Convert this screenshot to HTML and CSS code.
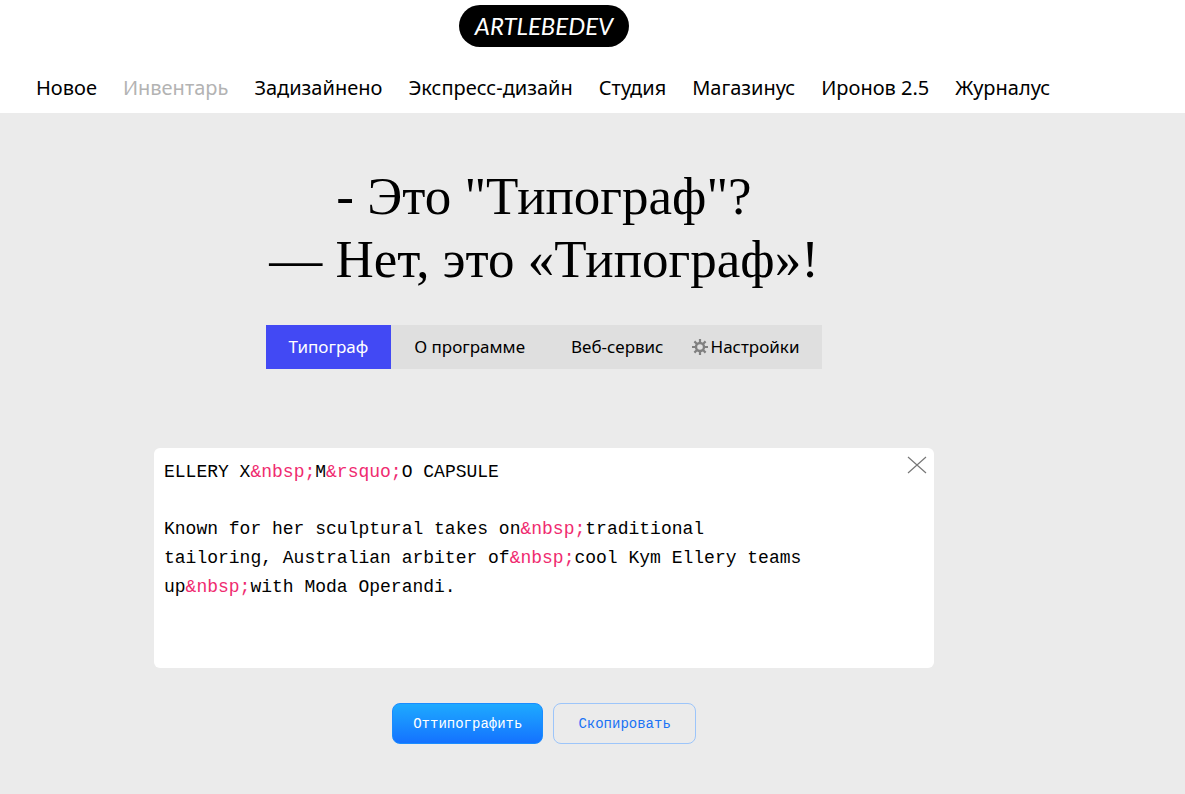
FILE: index.html
```html
<!DOCTYPE html>
<html lang="ru">
<head>
<meta charset="utf-8">
<meta name="viewport" content="width=device-width, initial-scale=1">
<title>Типограф</title>
<link rel="stylesheet" href="styles.css">
</head>
<body>
<header class="header">
  <div class="page">
    <a class="logo" href="#">ARTLEBEDEV</a>
    <nav class="menu" aria-label="Разделы">
      <a class="menu-link" href="#">Новое</a>
      <a class="menu-link menu-link-current" href="#">Инвентарь</a>
      <a class="menu-link" href="#">Задизайнено</a>
      <a class="menu-link" href="#">Экспресс-дизайн</a>
      <a class="menu-link" href="#">Студия</a>
      <a class="menu-link" href="#">Магазинус</a>
      <a class="menu-link" href="#">Иронов 2.5</a>
      <a class="menu-link" href="#">Журналус</a>
    </nav>
  </div>
</header>
<main class="main">
  <div class="page content">
    <h1 class="title">- Это "Типограф"?<br>— Нет, это «Типограф»!</h1>
    <nav class="tabs" aria-label="Типограф">
      <a class="tab tab-active" href="#">Типограф</a>
      <a class="tab" href="#">О программе</a>
      <a class="tab" href="#">Веб-сервис</a>
      <a class="tab tab-settings" href="#">
        <svg class="gear" viewBox="0 0 16 16" aria-hidden="true">
          <circle cx="8" cy="8" r="4" fill="none" stroke="currentColor" stroke-width="2.4"/>
          <path d="M8 0v4M8 12v4M0 8h4M12 8h4M2.4 2.4l2.6 2.6M11 11l2.6 2.6M13.6 2.4L11 5M5 11l-2.6 2.6" stroke="currentColor" stroke-width="2.2"/>
        </svg>Настройки</a>
    </nav>
    <section class="editor">
      <div class="text" role="textbox" aria-multiline="true" aria-label="Текст" contenteditable="true" spellcheck="false">
        <p class="paragraph">ELLERY X<span class="entity">&amp;nbsp;</span>M<span class="entity">&amp;rsquo;</span>O CAPSULE</p>
        <p class="paragraph">Known for her sculptural takes on<span class="entity">&amp;nbsp;</span>traditional<br>tailoring, Australian arbiter of<span class="entity">&amp;nbsp;</span>cool Kym Ellery teams<br>up<span class="entity">&amp;nbsp;</span>with Moda Operandi.</p>
      </div>
      <button class="clear" type="button" aria-label="Очистить">
        <svg class="cross" viewBox="0 0 20 18" aria-hidden="true"><path d="M1 1l18 16M19 1L1 17" stroke="currentColor" stroke-width="1.2"/></svg>
      </button>
    </section>
    <div class="actions">
      <button class="button button-primary" type="button">Оттипографить</button>
      <button class="button button-secondary" type="button">Скопировать</button>
    </div>
  </div>
</main>
</body>
</html>
```
FILE: styles.css
```css
* {
  box-sizing: border-box;
}

body {
  display: flex;
  flex-direction: column;
  min-height: 100vh;
  margin: 0;
  background: #fff;
  color: #000;
  font-family: "Noto Sans", sans-serif;
}

a {
  color: inherit;
  text-decoration: none;
}

.page {
  display: flex;
  flex-direction: column;
  align-items: center;
  max-width: 1088px;
}

.header {
  padding: 5px 0 10px;
}

.logo {
  padding: 0 16px;
  border-radius: 21px;
  background: #000;
  color: #fff;
  font: italic 24px/42px Lato, sans-serif;
}

.menu {
  display: flex;
  flex-wrap: wrap;
  gap: 0 26px;
  align-self: stretch;
  margin-top: 26px;
  padding-left: 36px;
  font-size: 20px;
  line-height: 30px;
}

.menu-link-current {
  color: #b3b3b3;
}

.main {
  flex: 1;
  padding: 52px 0;
  background: #ebebeb;
}

.title {
  margin: 0;
  font: 400 53px/63px "Liberation Serif", serif;
  text-align: center;
}

.tabs {
  display: flex;
  margin-top: 34px;
  background: #dfdfdf;
  font-size: 17px;
  line-height: 44px;
}

.tab {
  display: flex;
  align-items: center;
  padding: 0 23px;
}

.tab-active {
  background: #4249f4;
  color: #fff;
}

.tab-settings {
  gap: 3px;
  padding-left: 5px;
}

.gear {
  width: 16px;
  height: 16px;
  color: #808080;
}

.editor {
  position: relative;
  width: 100%;
  max-width: 780px;
  margin-top: 79px;
}

.text {
  display: flex;
  flex-direction: column;
  gap: 28px;
  min-height: 220px;
  padding: 10px;
  border-radius: 6px;
  background: #fff;
  font: 18px/29px "Liberation Mono", monospace;
}

.paragraph {
  margin: 0;
}

.entity {
  color: #ef2b70;
}

.clear {
  position: absolute;
  top: 8px;
  right: 7px;
  display: flex;
  padding: 0;
  border: 0;
  background: none;
  color: #777;
}

.cross {
  width: 20px;
  height: 18px;
}

.actions {
  display: flex;
  gap: 10px;
  margin-top: 35px;
}

.button {
  height: 41px;
  border: 1px solid;
  border-radius: 8px;
  font: 14px "Liberation Mono", monospace;
}

.button-primary {
  padding: 0 20px;
  border-color: #1a8cff;
  background: linear-gradient(#1eaaff, #1472ff);
  color: #fff;
}

.button-secondary {
  padding: 0 24px;
  border-color: #9cc5fa;
  background: none;
  color: #1a73f5;
}
```
